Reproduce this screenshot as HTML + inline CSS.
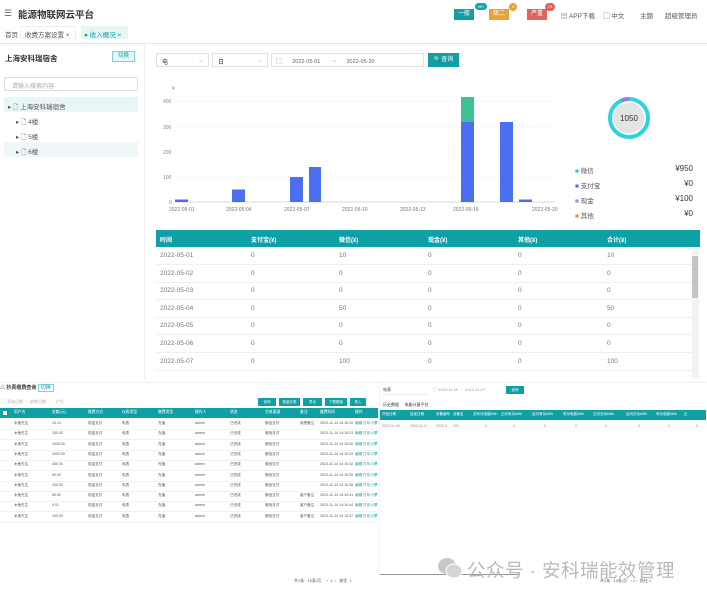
<!DOCTYPE html>
<html><head><meta charset="utf-8"><style>
*{margin:0;padding:0;box-sizing:border-box}
body{width:707px;height:597px;overflow:hidden;background:#fff;font-family:"Liberation Sans","Noto Sans CJK SC",sans-serif;color:#333;position:relative}
.a{position:absolute;white-space:nowrap}
.t{font-size:6.5px;color:#555}
.teal{background:#0fa0a6}
.th{color:#fff;font-size:6px;font-weight:bold}
</style></head><body>
<!-- header -->
<div class="a" style="left:4px;top:8px;font-size:9px;color:#666">☰</div>
<div class="a" style="left:18px;top:7px;font-size:9.5px;font-weight:bold;color:#333">能源物联网云平台</div>
<div class="a teal" style="left:454px;top:9px;width:20px;height:11px;color:#fff;font-size:6px;text-align:center;line-height:11px">一般</div>
<div class="a" style="left:475px;top:3px;width:12px;height:7px;border-radius:4px;background:#10a4a9;color:#fff;font-size:4px;text-align:center;line-height:7px">99+</div>
<div class="a" style="left:489px;top:9px;width:20px;height:11px;background:#e8a23a;color:#fff;font-size:6px;text-align:center;line-height:11px">级二</div>
<div class="a" style="left:509px;top:3px;width:8px;height:8px;border-radius:4px;background:#e8a23a;color:#fff;font-size:4px;text-align:center;line-height:8px">4</div>
<div class="a" style="left:527px;top:9px;width:20px;height:11px;background:#e06363;color:#fff;font-size:6px;text-align:center;line-height:11px">严重</div>
<div class="a" style="left:545px;top:3px;width:10px;height:8px;border-radius:4px;background:#e06363;color:#fff;font-size:4px;text-align:center;line-height:8px">74</div>
<div class="a t" style="left:561px;top:10px">▤ APP下载</div>
<div class="a t" style="left:603px;top:10px">▢ 中文</div>
<div class="a t" style="left:640px;top:10px">主题</div>
<div class="a t" style="left:665px;top:10px">超级管理员</div>
<!-- tabs -->
<div class="a t" style="left:5px;top:29px">首页</div>
<div class="a" style="left:20px;top:26px;width:56px;height:13px;border:1px solid #eee"></div>
<div class="a t" style="left:25px;top:29px">收费方案设置 ×</div>
<div class="a" style="left:81px;top:26px;width:47px;height:13px;background:#e6f6f7"></div>
<div class="a t" style="left:84px;top:29px;color:#0fa0a6">● 收入概况 ×</div>
<div class="a" style="left:0;top:43px;width:707px;height:1px;background:#e4e4e4"></div>
<!-- left -->
<div class="a" style="left:144px;top:44px;width:1px;height:335px;background:#eee"></div>
<div class="a" style="left:5px;top:53px;font-size:7.5px;font-weight:bold">上海安科瑞宿舍</div>
<div class="a" style="left:112px;top:51px;width:23px;height:11px;border:1px solid #7fcfd3;background:#e4f6f7;font-size:5.5px;color:#0fa0a6;text-align:center;line-height:9px">切换</div>
<div class="a" style="left:4px;top:77px;width:134px;height:14px;border:1px solid #ddd;border-radius:2px;font-size:6px;color:#aaa;padding:3px 7px">请输入搜索内容</div>
<div class="a" style="left:4px;top:97px;width:134px;height:15px;background:#e8f6f7"></div>
<div class="a t" style="left:8px;top:101px">▸ 🗋 上海安科瑞宿舍</div>
<div class="a t" style="left:16px;top:116px">▸ 🗋 4楼</div>
<div class="a t" style="left:16px;top:131px">▸ 🗋 5楼</div>
<div class="a" style="left:4px;top:142px;width:134px;height:15px;background:#eef8f8"></div>
<div class="a t" style="left:16px;top:146px">▸ 🗋 6楼</div>
<!-- filters -->
<div class="a" style="left:156px;top:53px;width:53px;height:14px;border:1px solid #e2e2e2;font-size:6px;padding:3px 5px">电<span style="float:right;color:#bbb">⌄</span></div>
<div class="a" style="left:212px;top:53px;width:56px;height:14px;border:1px solid #e2e2e2;font-size:6px;padding:3px 5px">日<span style="float:right;color:#bbb">⌄</span></div>
<div class="a" style="left:271px;top:53px;width:153px;height:14px;border:1px solid #e2e2e2;font-size:5.5px;padding:3px 4px;color:#666">▢ &nbsp;&nbsp;&nbsp;&nbsp;&nbsp;&nbsp;2022-05-01 &nbsp;&nbsp;&nbsp;&nbsp;&nbsp;&nbsp;&nbsp;~ &nbsp;&nbsp;&nbsp;&nbsp;&nbsp;&nbsp;2022-05-20</div>
<div class="a teal" style="left:428px;top:53px;width:31px;height:14px;color:#fff;font-size:6px;text-align:center;line-height:14px">🔍查询</div>
<!-- chart -->
<svg class="a" style="left:150px;top:80px" width="420" height="140">
<g font-size="5" fill="#888" font-family="Liberation Sans">
<text x="22" y="10">¥</text>
<text x="13" y="23">400</text><text x="13" y="49">300</text><text x="13" y="74">200</text><text x="13" y="99">100</text><text x="19" y="124">0</text>
</g>
<g stroke="#f0f0f0" stroke-width="0.6"><line x1="24" y1="21" x2="405" y2="21"/><line x1="24" y1="47" x2="405" y2="47"/><line x1="24" y1="72" x2="405" y2="72"/><line x1="24" y1="97" x2="405" y2="97"/></g>
<line x1="24" y1="122" x2="405" y2="122" stroke="#ccc" stroke-width="0.8"/>
<g fill="#4b6ff0">
<rect x="25" y="119.5" width="13" height="2.5"/>
<rect x="82" y="109.5" width="13" height="12.5"/>
<rect x="140" y="97" width="13" height="25"/>
<rect x="159" y="87" width="12" height="35"/>
<rect x="311" y="42" width="13" height="80"/>
<rect x="350" y="42" width="13" height="80"/>
<rect x="369" y="119.5" width="13" height="2.5"/>
</g>
<rect x="311" y="17" width="13" height="25" fill="#3cc295"/>
<g font-size="5" fill="#777" font-family="Liberation Sans">
<text x="19" y="131">2022-05-01</text><text x="76" y="131">2022-05-04</text><text x="134" y="131">2022-05-07</text><text x="192" y="131">2022-05-10</text><text x="250" y="131">2022-05-13</text><text x="303" y="131">2022-05-16</text><text x="382" y="131">2022-05-20</text>
</g>
</svg>
<!-- donut -->
<svg class="a" style="left:605px;top:94px" width="48" height="48">
<circle cx="24" cy="24" r="15.5" fill="#e4e4e4"/>
<circle cx="24" cy="24" r="19" fill="none" stroke="#2fd3e0" stroke-width="4"/>
<path d="M24 5 A19 19 0 0 0 16 6.8" fill="none" stroke="#9b7fe0" stroke-width="4"/>
<text x="24" y="27" font-size="8" text-anchor="middle" fill="#333" font-family="Liberation Sans">1050</text>
</svg>
<!-- legend -->
<div class="a t" style="left:575px;top:165px"><span style="color:#2fc8d6">■</span> 微信</div>
<div class="a t" style="left:575px;top:180px"><span style="color:#4b6ff0">■</span> 支付宝</div>
<div class="a t" style="left:575px;top:195px"><span style="color:#9b8fe0">■</span> 现金</div>
<div class="a t" style="left:575px;top:210px"><span style="color:#f08a4b">■</span> 其他</div>
<div class="a" style="right:14px;top:164px;font-size:8px;color:#333">¥950</div>
<div class="a" style="right:14px;top:179px;font-size:8px;color:#333">¥0</div>
<div class="a" style="right:14px;top:194px;font-size:8px;color:#333">¥100</div>
<div class="a" style="right:14px;top:209px;font-size:8px;color:#333">¥0</div>
<!-- table -->
<div class="a teal" style="left:156px;top:230px;width:544px;height:17px"></div>
<div class="a th" style="left:160px;top:235px">时间</div>
<div class="a th" style="left:251px;top:235px">支付宝(¥)</div>
<div class="a th" style="left:339px;top:235px">微信(¥)</div>
<div class="a th" style="left:428px;top:235px">现金(¥)</div>
<div class="a th" style="left:518px;top:235px">其他(¥)</div>
<div class="a th" style="left:607px;top:235px">合计(¥)</div>
<div class="a" style="left:692px;top:250px;width:7px;height:128px;background:#f3f3f3"></div>
<div class="a" style="left:692px;top:256px;width:6px;height:42px;background:#c4c4c4"></div>
<div id="rows"></div>
<script>
var d=[["2022-05-01","0","10","0","0","10"],["2022-05-02","0","0","0","0","0"],["2022-05-03","0","0","0","0","0"],["2022-05-04","0","50","0","0","50"],["2022-05-05","0","0","0","0","0"],["2022-05-06","0","0","0","0","0"],["2022-05-07","0","100","0","0","100"]];
var xs=[160,251,339,428,518,607],h="";
d.forEach(function(r,i){var y=247+i*17.6;h+='<div class="a" style="left:156px;top:'+(y+17)+'px;width:536px;height:1px;background:#efefef"></div>';r.forEach(function(c,j){h+='<div class="a" style="left:'+xs[j]+'px;top:'+(y+5)+'px;font-size:6.5px;color:#777">'+c+'</div>'})});
h+='<div class="a" style="left:0;top:384px;font-size:5px;color:#333;font-weight:bold">△ 抄表缴费查询 <span style="border:1px solid #7fcfd3;color:#0fa0a6;font-weight:normal;padding:0 2px">切换</span></div>';
h+='<div class="a" style="left:2px;top:399px;font-size:4px;color:#aaa">▢ 开始日期 &nbsp;~&nbsp; 结束日期 &nbsp;&nbsp;&nbsp;&nbsp;&nbsp;&nbsp;&nbsp; 户号</div>';
['查询','批量抄表','导出','下载模板','导入'].forEach(function(t,i){h+='<div class="a teal" style="left:'+[258,279,303,325,350][i]+'px;top:398px;width:'+[18,21,19,22,16][i]+'px;height:8px;color:#fff;font-size:3.5px;text-align:center;line-height:8px">'+t+'</div>'});
h+='<div class="a teal" style="left:0;top:408px;width:378px;height:10px"></div>';
h+='<div class="a" style="left:3px;top:411px;width:4px;height:4px;background:#fff"></div>';
var bx=[14,52,88,122,158,195,230,265,300,320,355];
var bh=['用户名','金额(元)','缴费方式','仪表类型','缴费类型','操作人','状态','交易渠道','备注','缴费时间','操作'];
bh.forEach(function(t,i){h+='<div class="a" style="left:'+bx[i]+'px;top:410px;font-size:3.8px;color:#fff">'+t+'</div>'});
var rv=['13.14','250.00','1000.00','1000.00','400.00','50.00','100.00','50.00','0.01','100.00'];
for(var i=0;i<10;i++){var y=420+i*10.3;var row=['木鱼先生',rv[i],'现金支付','电表','充值','admin','已完成','微信支付',(i==0?'我是备注':(i>6?'客户备注':'')),'2023-11-14 14:10:'+(20+i*3),'编辑 打印小票'];
row.forEach(function(t,j){h+='<div class="a" style="left:'+bx[j]+'px;top:'+(y+1)+'px;font-size:3.6px;color:'+(j==10?'#0fa0a6':'#555')+'">'+t+'</div>'});
h+='<div class="a" style="left:0;top:'+(y+9)+'px;width:378px;height:1px;background:#f2f2f2"></div>'}
h+='<div class="a" style="left:383px;top:387px;width:45px;height:8px;border-bottom:1px solid #eee;font-size:4px">电表</div>';
h+='<div class="a" style="left:433px;top:387px;font-size:4px;color:#999">▢ 2023-11-09 &nbsp;~&nbsp; 2023-11-17</div>';
h+='<div class="a teal" style="left:506px;top:386px;width:18px;height:8px;color:#fff;font-size:3.5px;text-align:center;line-height:8px">查询</div>';
h+='<div class="a" style="left:383px;top:402px;font-size:4px;color:#333">历史数据 &nbsp;&nbsp;&nbsp;&nbsp;电能计量平台</div>';
h+='<div class="a teal" style="left:380px;top:410px;width:326px;height:10px"></div>';
var rx=[382,410,436,453,473,501,532,563,593,626,656,684];
var rh=['开始日期','结束日期','设备编号','设备名','总有功电能kWh','正向有功kWh','反向有功kWh','有功电能kWh','正向无功kWh','反向无功kWh','有功电能kWh','正'];
rh.forEach(function(t,i){h+='<div class="a" style="left:'+rx[i]+'px;top:412px;font-size:3.5px;color:#fff">'+t+'</div>'});
['2023-11-09','2023-11-17','2023-0..','202','0','0','0','0','0','0','0','0'].forEach(function(t,i){h+='<div class="a" style="left:'+(rx[i]+(i>3?12:0))+'px;top:424px;font-size:3.5px;color:#888">'+t+'</div>'});
h+='<div class="a" style="left:294px;top:578px;font-size:4px;color:#555">共1条 &nbsp; 10条/页 &nbsp;&nbsp;&nbsp; ‹ &nbsp;1&nbsp; › &nbsp; 前往 &nbsp;1</div>';
h+='<div class="a" style="left:600px;top:578px;font-size:4px;color:#555">共1条 &nbsp; 10条/页 &nbsp; ‹ 1 › &nbsp;前往 1</div>';
h+='<div class="a" style="left:380px;top:574px;width:140px;height:1px;background:#999"></div>';
document.getElementById('rows').innerHTML=h;
</script>
<div class="a" style="left:0;top:382px;width:707px;height:1px;background:#f0f0f0"></div>
<div class="a" style="left:379px;top:383px;width:1px;height:195px;background:#f4f4f4"></div>
<!-- watermark -->
<svg class="a" style="left:437px;top:557px" width="26" height="22">
<ellipse cx="10" cy="9" rx="9" ry="8" fill="#c8c8c8"/><ellipse cx="17" cy="14" rx="8" ry="7" fill="#d4d4d4" stroke="#fff" stroke-width="1"/>
</svg>
<div class="a" style="left:467px;top:557px;font-size:18.5px;color:#b9b9b9;letter-spacing:0.5px">公众号 · 安科瑞能效管理</div>
</body></html>
